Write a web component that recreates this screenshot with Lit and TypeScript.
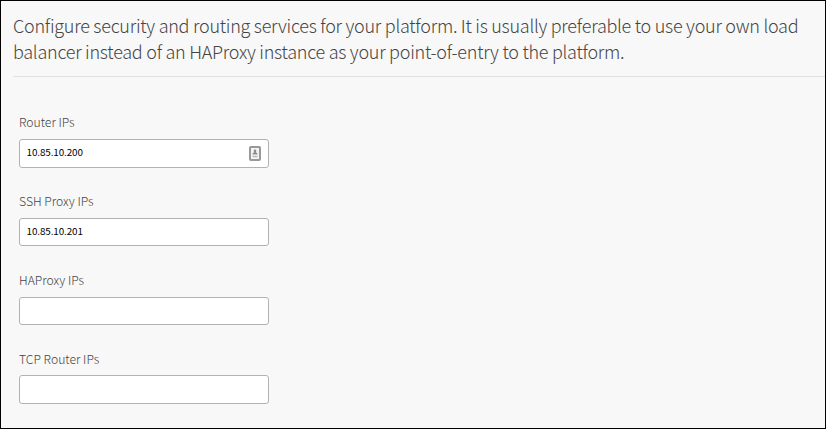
import { LitElement, html, css, svg, nothing } from "lit";
import { customElement, property } from "lit/decorators.js";

@customElement("ip-field")
class IpField extends LitElement {
  @property() label = "";
  @property() value = "";
  @property({ type: Boolean }) contact = false;

  static styles = css`
    :host {
      display: block;
      height: 78.75px;
    }
    .label {
      box-sizing: border-box;
      display: block;
      height: 27px;
      padding-top: 0.15px;
      line-height: 20px;
      font-size: 12.2px;
      font-weight: 300;
      color: #444;
      white-space: nowrap;
    }
    .box {
      box-sizing: border-box;
      width: 250px;
      height: 28.5px;
      border: 1px solid #b3b3b3;
      border-radius: 3px;
      background: #fff;
      display: flex;
      align-items: center;
      justify-content: space-between;
      padding: 0 7px 0 6.5px;
    }
    .value {
      font-size: 9.9px;
      line-height: 14px;
      letter-spacing: -0.1px;
      color: #000;
      margin-top: -3px;
    }
    .icon {
      display: block;
      width: 12px;
      height: 15px;
      margin-top: 1px;
    }
  `;

  render() {
    return html`
      <span class="label">${this.label}</span>
      <div class="box">
        <span class="value">${this.value}</span>
        ${this.contact
          ? html`<svg class="icon" viewBox="0 0 12 15">
              ${svg`<rect x="1" y="1" width="10" height="13" rx="0.8" fill="#f4f4f4" stroke="#999" stroke-width="2"/>
              <circle cx="6" cy="4.9" r="1.3" fill="#8d8d8d"/>
              <path d="M3.5 8.6V7.6L5.3 6.1h1.4l1.8 1.5v1z" fill="#8d8d8d"/>
              <rect x="3.5" y="9.8" width="5" height="1.4" fill="#b5b5b5"/>`}
            </svg>`
          : nothing}
      </div>
    `;
  }
}

@customElement("app-root")
class AppRoot extends LitElement {
  static styles = css`
    :host {
      display: block;
      box-sizing: border-box;
      width: 826px;
      height: 429px;
      border: 1px solid #000;
      background: #f8f8f8;
      overflow: hidden;
      font-family: "Noto Sans CJK SC", "Open Sans", sans-serif;
    }
    .intro {
      margin: 0 0 0 12px;
      padding-top: 11px;
      height: 64px;
      border-bottom: 1px solid #e0e0e0;
      font-size: 18px;
      letter-spacing: -0.26px;
      line-height: 26px;
      font-weight: 300;
      color: #444;
      white-space: nowrap;
    }
    .fields {
      padding: 35.2px 0 0 18px;
    }
  `;

  render() {
    return html`
      <div class="intro">
        Configure security and routing services for your platform. It is usually preferable to use your own load<br />
        balancer instead of an HAProxy instance as your point-of-entry to the platform.
      </div>
      <div class="fields">
        <ip-field label="Router IPs" value="10.85.10.200" contact></ip-field>
        <ip-field label="SSH Proxy IPs" value="10.85.10.201"></ip-field>
        <ip-field label="HAProxy IPs"></ip-field>
        <ip-field label="TCP Router IPs"></ip-field>
      </div>
    `;
  }
}
